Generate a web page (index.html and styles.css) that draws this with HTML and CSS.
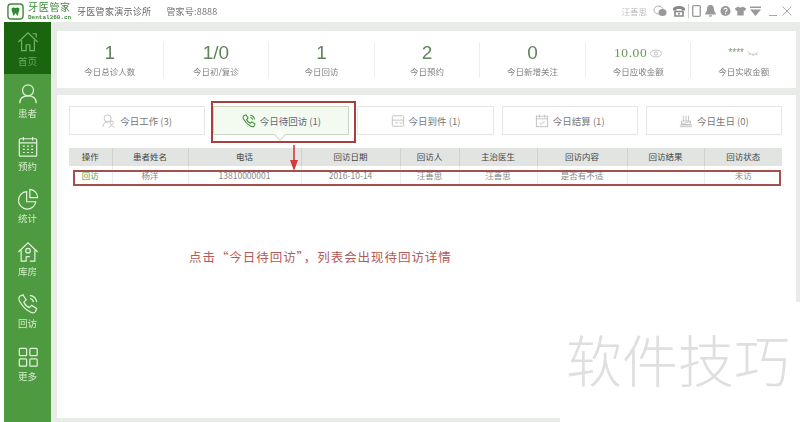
FILE: index.html
```html
<!DOCTYPE html>
<html lang="zh">
<head>
<meta charset="utf-8">
<title>牙医管家</title>
<link rel="stylesheet" href="styles.css">
</head>
<body>
<div class="app">
  <header class="topbar">
    <svg class="logo" viewBox="0 0 18 18"><rect x="1" y="1" width="16" height="16" rx="3.500" fill="#fff" stroke="#3d8a37" stroke-width="1.500"/><path d="M5 5.500c1.500-1.200 2.500-.4 4-.2 1.500-.2 2.500-1 4 .2.600 2-.4 3-.8 4.500-.3 1.500-.5 3.500-1.300 3.500s-.7-2.600-1.900-2.600-1.100 2.600-1.900 2.600-1-2-1.300-3.500C5.400 8.500 4.400 7.500 5 5.500z" fill="#2e8b2e"/></svg>
    <div class="brand"><span class="brand-cn">牙医管家</span><span class="brand-en">Dental360.cn</span></div>
    <span class="clinic">牙医管家演示诊所</span>
    <span class="account">管家号:8888</span>
    <div class="tools">
      <span class="user">汪善思</span>
      <svg class="tool tool-wide" viewBox="0 0 14 12"><ellipse cx="5.500" cy="5" rx="4.500" ry="4" fill="none" stroke="#aaa"/><ellipse cx="9.500" cy="7.500" rx="4" ry="3.500" fill="#999"/></svg>
      <svg class="tool tool-wide" viewBox="0 0 14 12"><path d="M1 4c0-4 12-4 12 0v1.500H9.500V4h-5v1.500H1z" fill="#888"/><path d="M3 6.500h8V11H3z" fill="none" stroke="#888" stroke-width="1.600"/><circle cx="7" cy="8.700" r="1" fill="#888"/></svg>
      <span class="tool-sep"></span>
      <svg class="tool tool-phone" viewBox="0 0 9 12"><rect x=".7" y=".7" width="7.600" height="10.600" rx="1" fill="none" stroke="#999" stroke-width="1.300"/></svg>
      <svg class="tool" viewBox="0 0 11 12"><path d="M5.500 0C8 0 9 2 9 4.500c0 2 2 3.500 2 5H0c0-1.500 2-3 2-5C2 2 3 0 5.500 0zM4 10.200h3c0 2-3 2-3 0z" fill="#999"/></svg>
      <svg class="tool" viewBox="0 0 12 12"><circle cx="6" cy="6" r="5.500" fill="#999"/><path d="M4.300 4.700c0-2.200 3.500-2.200 3.500 0 0 1.300-1.700 1.300-1.700 2.600M6.100 8.300v1.200" fill="none" stroke="#fff" stroke-width="1.100"/></svg>
      <svg class="tool" viewBox="0 0 12 12"><path d="M4 1 0 3l1 3 1.500-.5V11h7V5.500L11 6l1-3-4-2c-.5 1.500-3.500 1.500-4 0z" fill="#999"/></svg>
      <svg class="tool" viewBox="0 0 11 12"><path d="M0 1.500h11v1.500H0zM0 4.500h11L5.500 11z" fill="#999"/></svg>
      <span class="win-min"></span>
      <svg class="win-close" viewBox="0 0 10 10"><path d="M.5.500l9 9M9.500.500l-9 9" stroke="#aaa" fill="none"/></svg>
    </div>
  </header>

  <div class="body">
    <nav class="sidebar">
      <a class="nav-item active">
        <svg class="nav-icon" viewBox="0 0 24 24"><path d="M1.500 12 12 2l10.500 10M5 10v11.500h5V15h4v6.500h5V10M17 3h4v4" /></svg>
        <span>首页</span>
      </a>
      <a class="nav-item">
        <svg class="nav-icon" viewBox="0 0 24 24"><circle cx="12" cy="8" r="6"/><path d="M3 22c0-6 4-8 9-8s9 2 9 8"/></svg>
        <span>患者</span>
      </a>
      <a class="nav-item">
        <svg class="nav-icon" viewBox="0 0 24 24"><rect x="2.500" y="3" width="19" height="19" rx="1"/><path d="M2.500 7.500h19M7 1v4M17 1v4M6.500 11h2M11 11h2M15.500 11h2M6.500 14.500h2M11 14.500h2M15.500 14.500h2M6.500 18h2M11 18h2M15.500 18h2"/></svg>
        <span>预约</span>
      </a>
      <a class="nav-item">
        <svg class="nav-icon" viewBox="0 0 24 24"><path d="M10.500 4a9.500 9.500 0 1 0 10 11H10.500z"/><path d="M14 1.500a9 9 0 0 1 8.500 9H14z"/></svg>
        <span>统计</span>
      </a>
      <a class="nav-item">
        <svg class="nav-icon" viewBox="0 0 24 24"><path d="M1.500 12 12 2l10.500 10M4.500 10v12h5.500v-5M19.500 10v12H14"/><circle cx="12" cy="10.500" r="2.500"/><path d="M10 17h4"/></svg>
        <span>库房</span>
      </a>
      <a class="nav-item">
        <svg class="nav-icon" viewBox="0 0 24 24"><path d="M3 3.500 6.500 2 10 7.500 7.500 10c1 2.500 3.500 5 6 6l2.500-2.500 5.500 3.500-1.500 3.500c-1 1.500-3.500 1.500-6 0C9 18 5 13 2.500 8.500c-.8-2-.5-3.800.5-5z"/><path d="M14 2.500c4 .5 7 3.500 7.500 7.500M14 6c2 .3 3.700 2 4 4"/></svg>
        <span>回访</span>
      </a>
      <a class="nav-item">
        <svg class="nav-icon" viewBox="0 0 24 24"><rect x="2.500" y="2.500" width="8" height="8" rx="1"/><rect x="14" y="2.500" width="8" height="8" rx="1"/><rect x="2.500" y="14" width="8" height="8" rx="1"/><rect x="14" y="14" width="8" height="8" rx="1"/></svg>
        <span>更多</span>
      </a>
    </nav>

    <main class="content">
      <section class="stats">
        <div class="stat"><div class="stat-value">1</div><div class="stat-label">今日总诊人数</div></div>
        <div class="stat"><div class="stat-value">1/0</div><div class="stat-label">今日初/复诊</div></div>
        <div class="stat"><div class="stat-value">1</div><div class="stat-label">今日回访</div></div>
        <div class="stat"><div class="stat-value">2</div><div class="stat-label">今日预约</div></div>
        <div class="stat"><div class="stat-value">0</div><div class="stat-label">今日新增关注</div></div>
        <div class="stat"><div class="stat-value stat-money">10.00
          <svg class="eye" viewBox="0 0 14 9"><ellipse cx="7" cy="4.500" rx="6.500" ry="4"/><circle cx="7" cy="4.500" r="2"/></svg></div><div class="stat-label">今日应收金额</div></div>
        <div class="stat"><div class="stat-value stat-hidden">****
          <svg class="eye eye-closed" viewBox="0 0 14 6"><path d="M1 1c3 4 9 4 12 0M3 3 2 5M7 4v2M11 3l1 2"/></svg></div><div class="stat-label">今日实收金额</div></div>
      </section>

      <section class="panel">
        <div class="tabs">
          <div class="tab">
            <svg class="tab-icon" viewBox="0 0 16 16"><circle cx="6.500" cy="5" r="4"/><path d="M1 15c0-4 2.500-6 5.500-6M11 8a2 2 0 1 1 0 4 2 2 0 0 1 0-4zM8 15.500c.5-2.500 5.500-2.500 6 0"/></svg>
            <span>今日工作 (3)</span>
          </div>
          <div class="tab tab-active">
            <svg class="tab-icon tab-icon-green" viewBox="0 0 16 16"><path d="M2 2 4.500 1 7 4.500 5.200 6.300c.7 1.700 2.500 3.500 4.300 4.300L11.200 9l3.600 2.300-1 2.500c-.8 1-2.500 1-4.200 0C6.500 12 3.500 9 1.500 5.500 1 4 1.200 3 2 2z"/><path d="M9.500 1.500c2.500.3 4.500 2.300 4.800 4.800M9.500 4c1.300.2 2.300 1.200 2.500 2.500"/></svg>
            <span>今日待回访 (1)</span>
            <i class="tab-caret"></i>
          </div>
          <div class="tab">
            <svg class="tab-icon" viewBox="0 0 16 16"><rect x="1.500" y="2" width="13" height="12" rx="1"/><path d="M1.500 7h13M5 10h3M10 9.500l1.500 1.500 2-2"/></svg>
            <span>今日到件 (1)</span>
          </div>
          <div class="tab">
            <svg class="tab-icon" viewBox="0 0 16 16"><rect x="1.500" y="2.500" width="13" height="12"/><path d="M1.500 5.500h13M5 1v3M11 1v3M5 10l2 2 4-4"/></svg>
            <span>今日结算 (1)</span>
          </div>
          <div class="tab">
            <svg class="tab-icon" viewBox="0 0 16 16"><path d="M3 8h10v4H3zM1 14.500h14M1 12.500h14M5 8V2M8 8V2M11 8V2M3 10c1.500 1 2.500 1 5 0s3.500-1 5 0"/></svg>
            <span>今日生日 (0)</span>
          </div>
        </div>

        <table class="grid">
          <colgroup>
            <col class="c-op"><col class="c-name"><col class="c-phone"><col class="c-date"><col class="c-who"><col class="c-doc"><col class="c-text"><col class="c-res"><col class="c-state">
          </colgroup>
          <thead>
            <tr><th>操作</th><th>患者姓名</th><th>电话</th><th>回访日期</th><th>回访人</th><th>主治医生</th><th>回访内容</th><th>回访结果</th><th>回访状态</th></tr>
          </thead>
          <tbody>
            <tr><td class="op">回访</td><td>杨洋</td><td>13810000001</td><td>2016-10-14</td><td>汪善思</td><td>汪善思</td><td>是否有不适</td><td></td><td>未访</td></tr>
          </tbody>
        </table>

        <div class="mark-tab"></div>
        <div class="mark-row"></div>
        <svg class="mark-arrow" viewBox="0 0 10 26"><path d="M4.200 0h1.600v15H9L5 26 1 15h3.200z"/></svg>
        <p class="note">点击“今日待回访”，列表会出现待回访详情</p>
      </section>
    </main>
  </div>
  <div class="watermark">软件技巧</div>
</div>
</body>
</html>
```
FILE: styles.css
```css
* { box-sizing: border-box; }
html, body { margin: 0; height: 100%; }
body {
  background: #fff;
  font-family: "Noto Sans CJK SC", "Liberation Sans", sans-serif;
  overflow: hidden;
}
.app {
  position: relative;
  width: 800px;
  height: 422px;
  display: flex;
  flex-direction: column;
  filter: blur(0.35px);
}

/* top bar */
.topbar {
  height: 22px;
  display: flex;
  align-items: center;
  padding-left: 7px;
  flex: none;
}
.logo { width: 17px; height: 17px; margin-right: 4px; }
.brand { display: flex; flex-direction: column; gap: 1px; width: 46px; height: 20px; margin-right: 3px; }
.brand-cn { display: block; font-size: 10px; line-height: 12px; color: #3d8a37; letter-spacing: .7px; white-space: nowrap; }
.brand-en { display: block; font: bold 6px/7px "Liberation Mono", monospace; color: #3d8a37; white-space: nowrap; }
.clinic { font-size: 9px; color: #666; letter-spacing: .3px; margin-right: 15px; }
.account { font-size: 9px; color: #777; letter-spacing: .2px; }
.tools { margin-left: auto; display: flex; align-items: center; padding-right: 8px; }
.user { font-size: 8.500px; color: #bbb; margin-right: 6px; }
.tool { width: 11px; height: 12px; margin-right: 4px; }
.tool-wide { width: 14px; margin-right: 5px; }
.tool-phone { width: 9px; }
.tool-sep { width: 1px; height: 14px; background: #ccc; margin: 0 3px 0 -3px; }
.win-min { width: 8px; height: 1px; background: #aaa; margin: 8px 5px 0 4px; }
.win-close { width: 10px; height: 10px; }

/* layout */
.body { flex: 1; display: flex; margin-left: 4px; min-height: 0; }
.sidebar {
  width: 47px;
  background: #4e9a40;
  display: flex;
  flex-direction: column;
  flex: none;
}
.nav-item {
  height: 52.500px;
  display: flex;
  flex-direction: column;
  align-items: center;
  padding-top: 9px;
  color: #d4ecca;
  font-size: 9.500px;
  line-height: 13px;
}
.nav-item.active { background: #1b6410; color: #69a860; height: 52px; }
.nav-icon {
  width: 22px;
  height: 22px;
  margin-bottom: 2px;
  fill: none;
  stroke: #e4f5de;
  stroke-width: 1.300;
}
.active .nav-icon { stroke: #76b36a; }

.content {
  flex: 1;
  background: #e9ebe8;
  padding: 9px 4px 4px 6px;
  display: flex;
  flex-direction: column;
  gap: 7px;
  min-width: 0;
}

/* stats */
.stats {
  height: 57px;
  background: #fff;
  display: grid;
  grid-template-columns: repeat(7, 1fr);
  align-items: center;
  flex: none;
}
.stat {
  height: 36px;
  text-align: center;
  border-left: 1px solid #eee;
}
.stat:first-child { border-left: 0; }
.stat-value {
  height: 23px;
  font: 19px/22px "Liberation Sans", sans-serif;
  color: #5f8558;
  display: flex;
  justify-content: center;
  align-items: center;
  gap: 3px;
}
.stat-money { font: 13.500px/22px "Liberation Serif", serif; color: #6c9460; letter-spacing: .6px; }
.stat-hidden { font-size: 10px; color: #7d9a76; }
.stat-label { font-size: 8.500px; line-height: 12px; color: #808080; }
.eye { width: 12px; height: 9px; fill: none; stroke: #aaa; stroke-width: .8; }
.eye-closed { height: 5px; }

/* panel */
.panel {
  position: relative;
  flex: 1;
  background: #fff;
  padding: 11px 14px 0 12px;
}
.tabs {
  display: grid;
  grid-template-columns: repeat(5, 1fr);
  gap: 8px;
}
.tab {
  position: relative;
  height: 29px;
  border: 1px solid #e6e6e6;
  display: flex;
  align-items: center;
  justify-content: center;
  gap: 4px;
  font-size: 9.500px;
  color: #777;
}
.tab-active { background: #f3fbf0; border-color: #c8d8c4; color: #667; }
.tab-icon { width: 14px; height: 14px; fill: none; stroke: #bbb; stroke-width: 1; }
.tab-icon-green { stroke: #3d8a37; stroke-width: 1.200; }
.tab-caret {
  position: absolute;
  left: 62px;
  bottom: -5px;
  width: 8px;
  height: 8px;
  background: #fff;
  border-right: 1px solid #c8d8c4;
  border-bottom: 1px solid #c8d8c4;
  transform: rotate(45deg);
}

/* table */
.grid {
  width: 713px;
  margin-top: 13px;
  table-layout: fixed;
  border-collapse: collapse;
}
.c-op { width: 43px; } .c-name { width: 76px; } .c-phone { width: 113px; }
.c-date { width: 99px; } .c-who { width: 59px; } .c-doc { width: 78px; }
.c-text { width: 90px; } .c-res { width: 77px; } .c-state { width: 78px; }
.grid th {
  height: 18px;
  padding: 0 0 2px;
  background: #e2e4e2;
  border-left: 1px solid #d0d2d0;
  font-size: 8.500px;
  font-weight: 400;
  color: #444;
}
.grid th:first-child { border-left: 0; }
.grid td {
  height: 18px;
  padding: 0;
  text-align: center;
  font-size: 8.500px;
  color: #888;
  border-left: 1px solid #ececec;
}
.grid td:first-child { border-left: 0; }
.grid td.op { color: #5aa050; }

/* annotations over the screenshot */
.mark-tab {
  position: absolute;
  left: 154px;
  top: 6px;
  width: 145px;
  height: 42px;
  border: 2px solid #a5403c;
}
.mark-row {
  position: absolute;
  left: 16px;
  top: 75px;
  width: 708px;
  height: 16px;
  border: 2px solid #a5504c;
}
.mark-arrow {
  position: absolute;
  left: 232px;
  top: 50px;
  width: 10px;
  height: 26px;
  fill: #d23c3c;
}
.note {
  position: absolute;
  left: 132px;
  top: 153px;
  margin: 0;
  font-size: 12.500px;
  line-height: 18px;
  letter-spacing: .95px;
  color: #b25a55;
  white-space: nowrap;
}
.watermark {
  position: absolute;
  right: 0;
  bottom: 0;
  width: 240px;
  height: 120px;
  padding: 18px 0 0 6px;
  background: #fff;
  font-size: 56px;
  font-weight: 300;
  line-height: 76px;
  color: #dfdfdf;
  white-space: nowrap;
}
```
